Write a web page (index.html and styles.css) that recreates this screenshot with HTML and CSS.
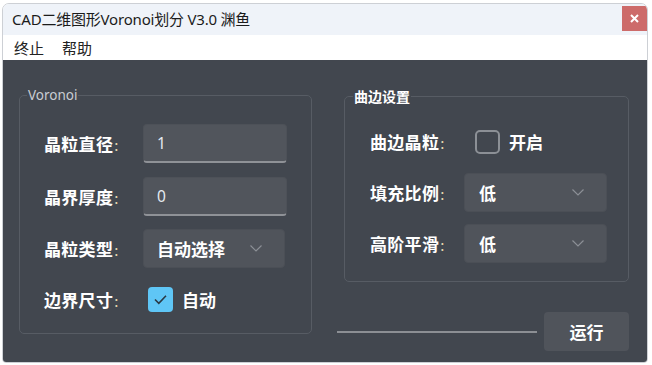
FILE: index.html
```html
<!DOCTYPE html>
<html lang="zh-CN">
<head>
<meta charset="utf-8">
<title>CAD二维图形Voronoi划分 V3.0 渊鱼</title>
<link rel="stylesheet" href="styles.css">
</head>
<body>
<div class="window">
  <div class="titlebar">
    <span class="title">CAD二维图形Voronoi划分 V3.0 渊鱼</span>
    <button class="close" type="button">
      <svg width="9" height="9" viewBox="0 0 9 9"><path d="M1 1 L8 8 M8 1 L1 8" stroke="#fff" stroke-width="2" fill="none"/></svg>
    </button>
  </div>
  <div class="menubar">
    <span class="menu-item">终止</span>
    <span class="menu-item">帮助</span>
  </div>
  <div class="body">
    <fieldset class="group group-left">
      <legend class="legend-light">Voronoi</legend>
      <div class="rows rows-left">
        <div class="row">
          <span class="label">晶粒直径<span class="colon">:</span></span>
          <div class="input">1</div>
        </div>
        <div class="row">
          <span class="label">晶界厚度<span class="colon">:</span></span>
          <div class="input">0</div>
        </div>
        <div class="row">
          <span class="label">晶粒类型<span class="colon">:</span></span>
          <div class="combo combo-left">
            <span class="combo-text">自动选择</span>
            <svg class="chev" width="12" height="7" viewBox="0 0 12 7"><path d="M0.5 0.5 L6 6 L11.5 0.5" stroke="#8b8f95" stroke-width="1.2" fill="none"/></svg>
          </div>
        </div>
        <div class="row row-check">
          <span class="label">边界尺寸<span class="colon">:</span></span>
          <div class="check-wrap">
            <span class="checkbox checked">
              <svg width="25" height="25" viewBox="0 0 25 25"><path d="M7 12.5 L10.8 16.3 L18 8.8" stroke="#2a3944" stroke-width="1.6" fill="none"/></svg>
            </span>
            <span class="check-text">自动</span>
          </div>
        </div>
      </div>
    </fieldset>
    <div class="right-col">
      <fieldset class="group group-right">
        <legend class="legend-bold">曲边设置</legend>
        <div class="rows rows-right">
          <div class="row">
            <span class="label label-right">曲边晶粒<span class="colon">:</span></span>
            <div class="check-wrap check-right">
              <span class="checkbox unchecked"></span>
              <span class="check-text">开启</span>
            </div>
          </div>
          <div class="row">
            <span class="label label-right">填充比例<span class="colon">:</span></span>
            <div class="combo combo-right">
              <span class="combo-text">低</span>
              <svg class="chev" width="12" height="7" viewBox="0 0 12 7"><path d="M0.5 0.5 L6 6 L11.5 0.5" stroke="#8b8f95" stroke-width="1.2" fill="none"/></svg>
            </div>
          </div>
          <div class="row">
            <span class="label label-right">高阶平滑<span class="colon">:</span></span>
            <div class="combo combo-right">
              <span class="combo-text">低</span>
              <svg class="chev" width="12" height="7" viewBox="0 0 12 7"><path d="M0.5 0.5 L6 6 L11.5 0.5" stroke="#8b8f95" stroke-width="1.2" fill="none"/></svg>
            </div>
          </div>
        </div>
      </fieldset>
      <div class="bottom-row">
        <div class="progress-line"></div>
        <button class="run" type="button">运行</button>
      </div>
    </div>
  </div>
</div>
</body>
</html>
```
FILE: styles.css
```css
* { box-sizing: border-box; }

html, body {
  margin: 0;
  padding: 0;
  background: #ffffff;
}

body {
  font-family: "Noto Sans", "Noto Sans CJK SC", sans-serif;
}

.window {
  margin: 3px 0 0 2px;
  width: 646px;
  height: 360px;
  border: 1px solid #cdd0d5;
  border-radius: 7px 7px 4px 4px;
  overflow: hidden;
  display: flex;
  flex-direction: column;
}

.titlebar {
  height: 31px;
  flex: none;
  background: #eff3f9;
  display: flex;
  align-items: flex-start;
  justify-content: space-between;
  padding-left: 9px;
}

.title {
  font-size: 15px;
  line-height: 31px;
  color: #1b1b1b;
  letter-spacing: -0.2px;
}

.close {
  margin: 2px 0 0 0;
  width: 25px;
  height: 25px;
  border: none;
  padding: 0;
  background: #cd6b6a;
  display: flex;
  align-items: center;
  justify-content: center;
}

.menubar {
  height: 25px;
  flex: none;
  background: #ffffff;
  display: flex;
  align-items: center;
  gap: 18px;
  padding-left: 11px;
}

.menu-item {
  font-family: "Noto Sans CJK SC", sans-serif;
  font-size: 15px;
  line-height: 25px;
  color: #222222;
}

.body {
  flex: 1;
  background: #42474f;
  display: grid;
  grid-template-columns: 293px 285px;
  column-gap: 32px;
  align-items: start;
  padding: 28px 0 0 16px;
  font-family: "Noto Sans CJK SC", sans-serif;
}

.group {
  margin: 0;
  border: 1px solid #575c64;
  border-radius: 5px;
  min-width: 0;
}

.group-left {
  height: 246px;
  padding: 22px 0 0 24px;
}

.group-right {
  margin-top: 1px;
  height: 193px;
  padding: 19px 0 0 25px;
}

.group legend {
  height: 14px;
  line-height: 14px;
  padding: 0 1px;
}

.legend-light {
  margin-left: -17px;
  font-family: "Noto Sans", sans-serif;
  font-size: 13.5px;
  color: #c9cdd3;
  font-weight: 400;
}

.legend-bold {
  margin-left: -17px;
  font-size: 14px;
  font-weight: 700;
  color: #ffffff;
}

.rows {
  display: flex;
  flex-direction: column;
}

.rows-left { gap: 13.5px; }
.rows-right { gap: 12px; }

.row {
  height: 39px;
  display: flex;
  align-items: center;
}

.row-check { height: 35px; }

.label {
  width: 99px;
  flex: none;
  font-size: 17px;
  font-weight: 700;
  color: #ffffff;
  letter-spacing: 0.3px;
}

.label-right { width: 94px; }

.colon {
  font-weight: 400;
  font-size: 15px;
  color: #e8d9b0;
  margin-left: 1px;
}

.input {
  width: 144px;
  height: 39px;
  border-radius: 4px;
  background: #51555c;
  border: 1px solid #4d5158;
  border-bottom: 2px solid #8f9297;
  padding-left: 13px;
  font-family: "Noto Sans", sans-serif;
  font-size: 15.5px;
  line-height: 36px;
  color: #e4eaf0;
}

.combo {
  height: 39px;
  border-radius: 4px;
  background: #50545b;
  border: 1px solid #4b4f56;
  display: flex;
  align-items: center;
  justify-content: space-between;
  padding: 0 22px 0 13px;
}

.combo-left { width: 142px; }
.combo-right { width: 143px; padding-left: 14px; }

.combo-text {
  font-size: 17px;
  font-weight: 700;
  color: #ffffff;
}

.chev { flex: none; }

.check-wrap {
  display: flex;
  align-items: center;
  gap: 9px;
  margin-left: 5px;
}

.check-right { margin-left: 11px; }

.checkbox {
  width: 25px;
  height: 25px;
  border-radius: 4px;
  display: block;
  flex: none;
}

.checkbox.checked {
  background: #5fc6f6;
}

.checkbox.checked svg { display: block; }

.checkbox.unchecked {
  border: 2px solid #8c9096;
  border-radius: 5px;
  height: 24px;
}

.check-text {
  font-size: 17px;
  font-weight: 700;
  color: #ffffff;
}

.right-col {
  display: flex;
  flex-direction: column;
}

.bottom-row {
  margin: 30px 0 0 -7px;
  width: 292px;
  height: 39px;
  display: flex;
  align-items: center;
  gap: 7px;
}

.progress-line {
  width: 200px;
  height: 2px;
  background: #8c8f94;
  margin-top: 1px;
}

.run {
  width: 85px;
  height: 39px;
  border: none;
  border-radius: 4px;
  background: #50545b;
  font-family: "Noto Sans CJK SC", sans-serif;
  font-size: 17px;
  font-weight: 700;
  color: #ffffff;
  padding: 0;
}
```
